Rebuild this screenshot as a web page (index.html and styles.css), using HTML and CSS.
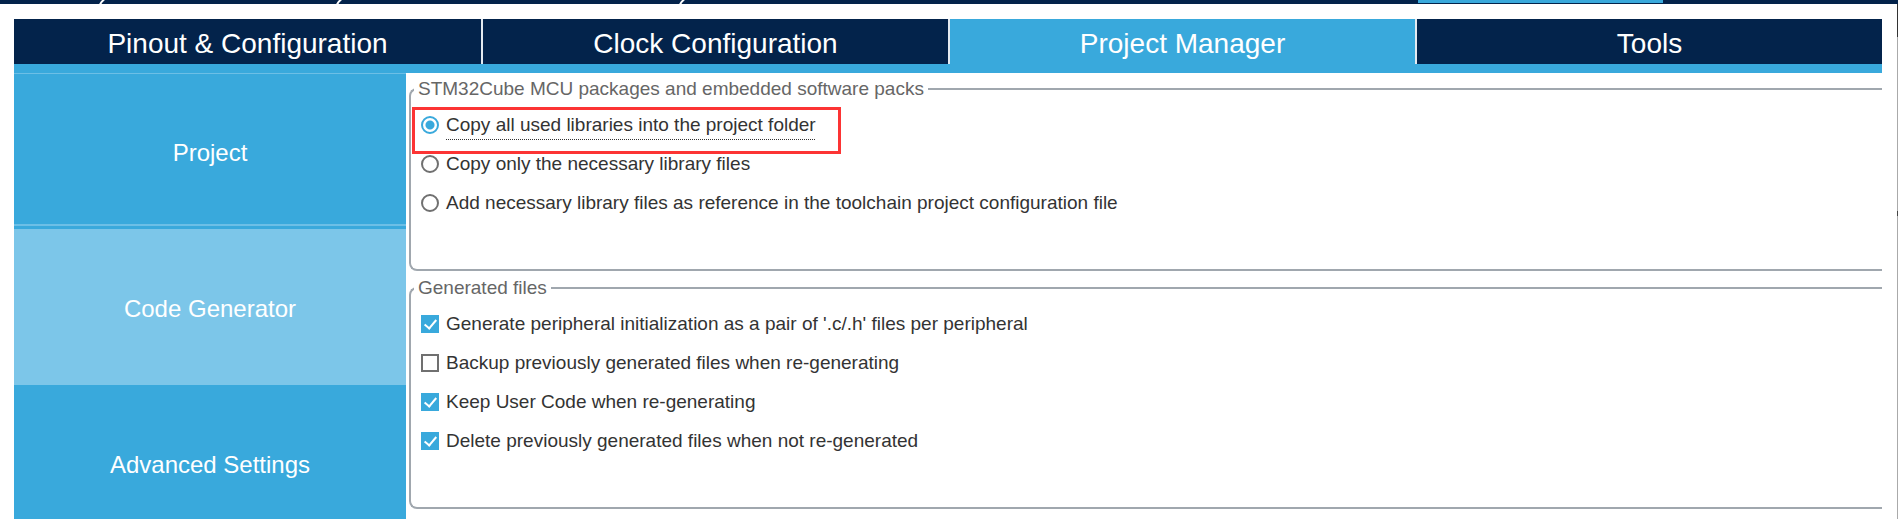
FILE: index.html
```html
<!DOCTYPE html>
<html lang="en">
<head>
<meta charset="utf-8">
<title>Project Manager</title>
<link rel="stylesheet" href="styles.css">
</head>
<body>
<div class="window">
  <header class="crumbs">
    <svg class="crumb crumb-home" viewBox="0 0 6 4"><path d="M1 4.500L2.500 2L5.500-1"/></svg>
    <svg class="crumb crumb-device" viewBox="0 0 6 4"><path d="M1 4.500L2.500 2L5.500-1"/></svg>
    <svg class="crumb crumb-file" viewBox="0 0 6 4"><path d="M1 4.500L2.500 2L5.500-1"/></svg>
    <span class="generate"></span>
  </header>
  <div class="workspace">
    <nav class="tabs">
      <button class="tab" type="button">Pinout &amp; Configuration</button>
      <button class="tab" type="button">Clock Configuration</button>
      <button class="tab tab-active" type="button">Project Manager</button>
      <button class="tab" type="button">Tools</button>
    </nav>
    <div class="body">
      <nav class="side">
        <button class="side-item side-lined" type="button">Project</button>
        <button class="side-item side-active" type="button">Code Generator</button>
        <button class="side-item" type="button">Advanced Settings</button>
      </nav>
      <main class="panel">
        <fieldset class="group">
          <legend>STM32Cube MCU packages and embedded software packs</legend>
          <label class="option marked"><input type="radio" name="copy" checked><span class="focused">Copy all used libraries into the project folder</span></label>
          <label class="option"><input type="radio" name="copy"><span>Copy only the necessary library files</span></label>
          <label class="option"><input type="radio" name="copy"><span>Add necessary library files as reference in the toolchain project configuration file</span></label>
        </fieldset>
        <fieldset class="group">
          <legend>Generated files</legend>
          <label class="option"><input type="checkbox" checked><span>Generate peripheral initialization as a pair of '.c/.h' files per peripheral</span></label>
          <label class="option"><input type="checkbox"><span>Backup previously generated files when re-generating</span></label>
          <label class="option"><input type="checkbox" checked><span>Keep User Code when re-generating</span></label>
          <label class="option"><input type="checkbox" checked><span>Delete previously generated files when not re-generated</span></label>
        </fieldset>
        <fieldset class="group">
          <legend>HAL Settings</legend>
        </fieldset>
      </main>
    </div>
  </div>
  <div class="edge"></div>
</div>
</body>
</html>
```
FILE: styles.css
```css
*, *::after { box-sizing: border-box; }

body {
  margin: 0;
  background: #fff;
  color: #333;
  font: 19px/24px "Liberation Sans", Arial, sans-serif;
}

button {
  margin: 0;
  padding: 0;
  border: 0;
  color: #fff;
  font-family: "Liberation Sans", Arial, sans-serif;
}

.window {
  position: relative;
  display: flex;
  flex-direction: column;
  height: 100vh;
  overflow: hidden;
}

.crumbs {
  position: relative;
  flex: none;
  height: 4px;
  background: #03234b;
}

.crumb {
  position: absolute;
  top: 0;
  width: 6px;
  height: 4px;
  fill: none;
  stroke: #fff;
  stroke-width: 2;
}

.crumb-home { left: 99px; }
.crumb-device { left: 336px; }
.crumb-file { left: 679px; }

.generate {
  position: absolute;
  top: 0;
  right: 235px;
  width: 245px;
  height: 3px;
  background: #39a9dc;
}

.workspace {
  flex: 1;
  display: flex;
  flex-direction: column;
  min-height: 0;
  padding: 15px 16px 0 14px;
}

.tabs {
  flex: none;
  display: grid;
  grid-template-columns: repeat(4, 1fr);
  border-bottom: 9px solid #39a9dc;
}

.tab {
  height: 45px;
  padding-top: 4px;
  background: #03234b;
  font-size: 28px;
  line-height: 41px;
}

.tab + .tab { border-left: 2px solid #e4eaf0; }
.tab-active { background: #39a9dc; }

.body {
  flex: 1;
  display: flex;
  min-height: 0;
}

.side {
  flex: none;
  width: 392px;
  background: #39a9dc;
}

.side-item {
  display: block;
  width: 100%;
  height: 156px;
  padding-top: 4px;
  background: #39a9dc;
  font-size: 24px;
}

.side-lined {
  background: linear-gradient(#6cbfe6 1px, #39a9dc 1px 151px, #6cbfe6 151px 153px, #39a9dc 153px);
}

.side-active { background: #7cc6e9; }

.panel {
  flex: 1;
  min-width: 0;
  padding: 4px 0 0 3px;
}

.group {
  min-width: 0;
  margin: 0 0 5px;
  padding: 4px 0 47px 2px;
  border: 2px solid #a0a7ae;
  border-right: 0;
  border-radius: 8px 0 0 8px;
}

.group legend {
  margin-left: 1px;
  padding: 0 4px;
  color: #666;
}

.option {
  display: flex;
  align-items: center;
  gap: 7px;
  width: fit-content;
  height: 39px;
  padding-left: 8px;
}

.marked {
  position: relative;
}

.marked::after {
  content: "";
  position: absolute;
  top: 2px;
  left: -1px;
  right: -25px;
  height: 47px;
  border: 3px solid #fc3434;
}

.option input {
  appearance: none;
  flex: none;
  width: 18px;
  height: 18px;
  margin: 0;
  border: 2px solid #707070;
  background: #fff;
}

.option input[type="radio"] { border-radius: 50%; }

.option input[type="radio"]:checked {
  border-color: #39a9dc;
  background: radial-gradient(circle, #39a9dc 4px, #fff 5px);
}

.option input[type="checkbox"]:checked {
  border-color: #39a9dc;
  background: #39a9dc;
  display: grid;
}

.option input[type="checkbox"]:checked::after {
  content: "";
  width: 7px;
  height: 12px;
  justify-self: center;
  border: solid #fff;
  border-width: 0 2px 2px 0;
  rotate: 40deg;
}

.focused {
  background: repeating-linear-gradient(90deg, #333 0 1px, transparent 1px 2px) bottom / 100% 1px no-repeat;
  padding: 3px 0;
}

.edge {
  position: absolute;
  top: 4px;
  right: 0;
  bottom: 0;
  width: 1px;
  background: linear-gradient(#333 33px, #aaa 33px 207px, #444 207px 212px, #aaa 212px);
}
```
